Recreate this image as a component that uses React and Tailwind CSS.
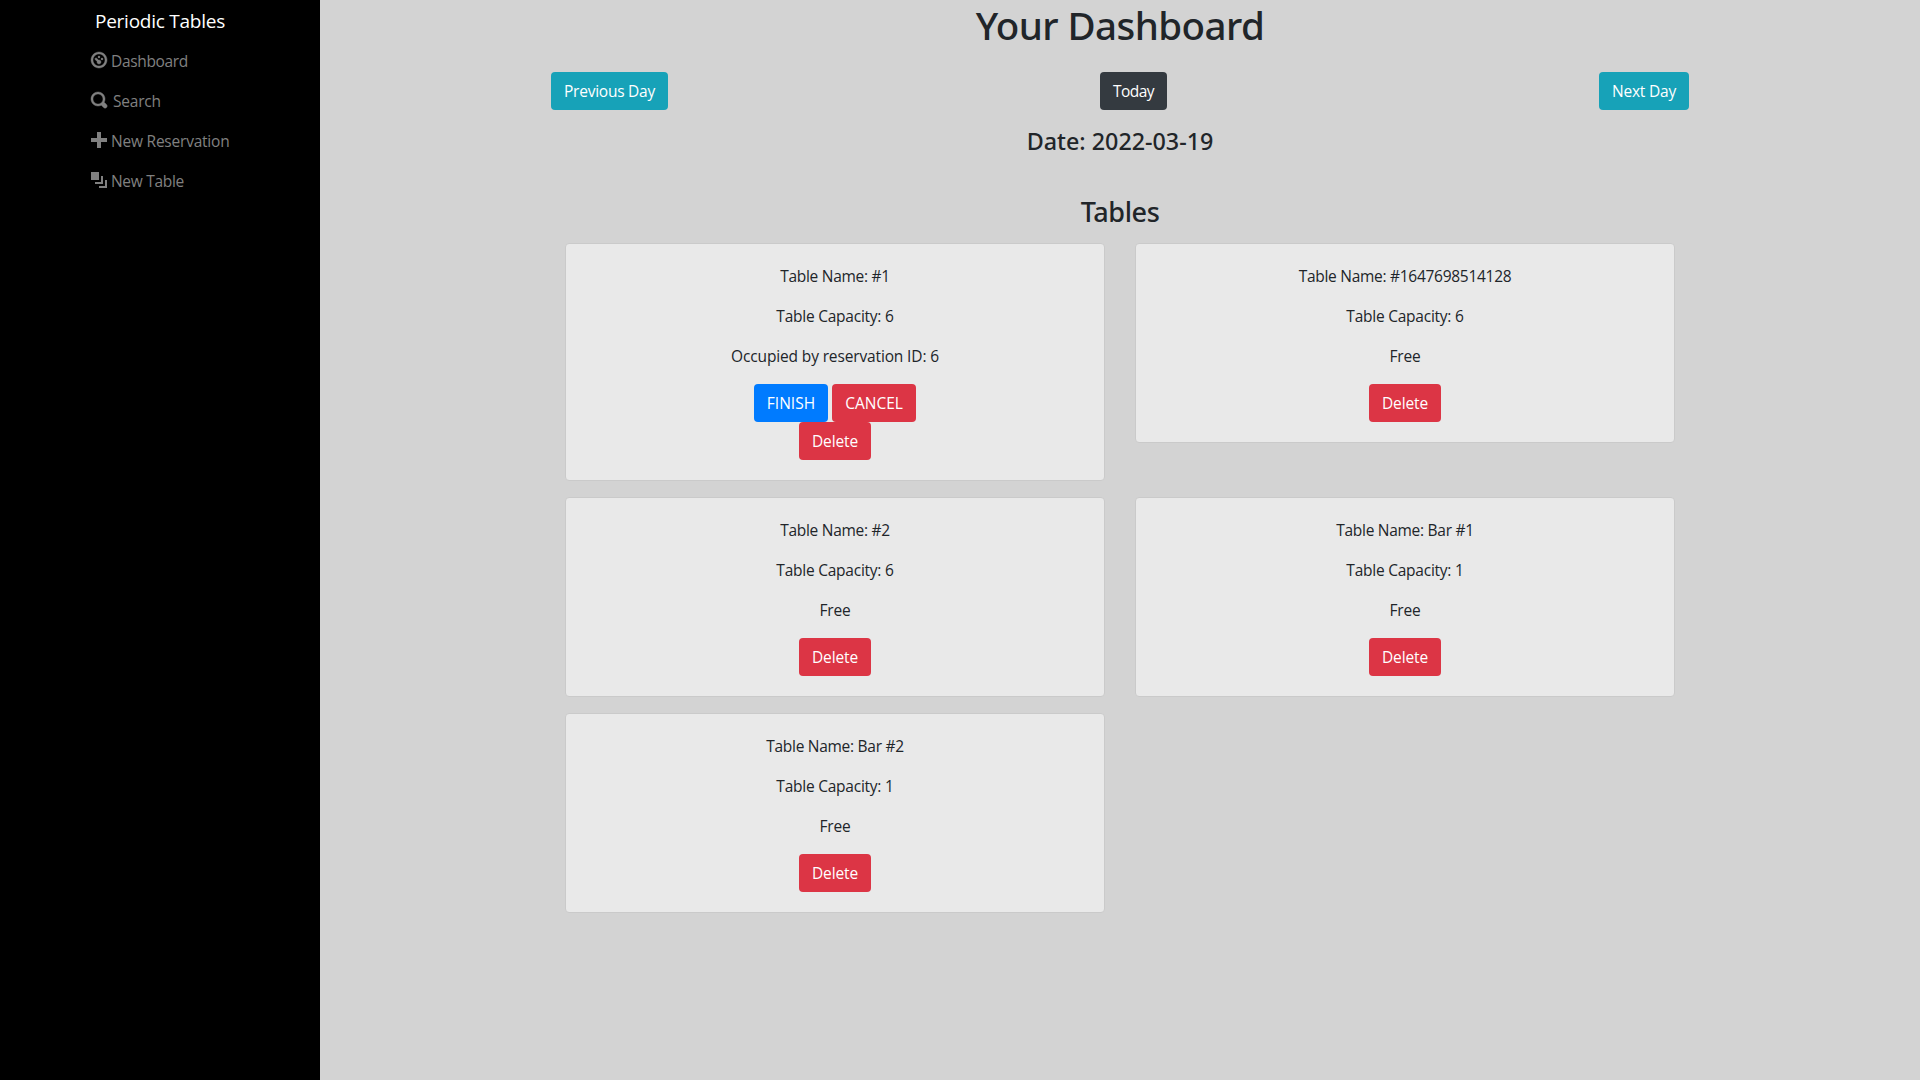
const icons = {
  dashboard:
    'M4 0c-2.2 0-4 1.8-4 4s1.8 4 4 4 4-1.8 4-4-1.8-4-4-4zm0 1c1.66 0 3 1.34 3 3s-1.34 3-3 3-3-1.34-3-3 1.34-3 3-3zm0 1c-.28 0-.5.22-.5.5s.22.5.5.5.5-.22.5-.5-.22-.5-.5-.5zm-1.66 1a.5.5 0 0 0-.19.84l.91.91c-.02.08-.06.16-.06.25 0 .55.45 1 1 1s1-.45 1-1-.45-1-1-1c-.09 0-.17.04-.25.06l-.91-.91a.5.5 0 0 0-.44-.16.5.5 0 0 0-.06 0zm3.16 0c-.28 0-.5.22-.5.5s.22.5.5.5.5-.22.5-.5-.22-.5-.5-.5z',
  search:
    'M3.5 0c-1.93 0-3.5 1.57-3.5 3.5s1.57 3.5 3.5 3.5c.59 0 1.17-.14 1.66-.41a1 1 0 0 0 .13.13l1 1a1.02 1.02 0 1 0 1.44-1.44l-1-1a1 1 0 0 0-.16-.13c.27-.49.44-1.06.44-1.66 0-1.93-1.55-3.5-3.5-3.5zm0 1c1.39 0 2.5 1.1 2.5 2.5 0 .66-.24 1.27-.66 1.72-.01.01-.02.02-.03.03a1 1 0 0 0-.13.13c-.44.4-1.04.63-1.69.63-1.39 0-2.5-1.1-2.5-2.5s1.1-2.5 2.5-2.5z',
  plus: 'M3 0v3h-3v2h3v3h2v-3h3v-2h-3v-3h-2z',
  layers: 'M0 0v4h4v-4h-4zm5 2v3h-3v1h4v-4h-1zm2 2v3h-3v1h4v-4h-1z',
};

const nav = [
  { icon: 'dashboard', label: 'Dashboard', stroke: 0.22, text: 'ml-[4px] tracking-[-0.33px]' },
  { icon: 'search', label: 'Search', stroke: 0.22, text: 'ml-[6px] tracking-[-0.2px]' },
  { icon: 'plus', label: 'New Reservation', stroke: 0, text: 'ml-[4px] tracking-[-0.22px]' },
  { icon: 'layers', label: 'New Table', stroke: 0, text: 'ml-[4px] tracking-[-0.3px]' },
];

const tables = [
  { name: '#1', capacity: 6, reservation: 6 },
  { name: '#1647698514128', capacity: 6 },
  { name: '#2', capacity: 6 },
  { name: 'Bar #1', capacity: 1 },
  { name: 'Bar #2', capacity: 1 },
];

function Button({ className, children }) {
  return (
    <button
      type="button"
      className={`flex h-[38px] items-center justify-center rounded-[4px] text-[15.5px] leading-6 whitespace-nowrap text-white ${className}`}
    >
      {children}
    </button>
  );
}

function TableCard({ table }) {
  return (
    <div className="flex flex-col items-center self-start rounded-[4px] border border-[#cacaca] bg-[#e9e9e9] p-5 text-center tracking-[-0.28px]">
      <p className="mb-4">Table Name: {table.name}</p>
      <p className="mb-4 tracking-[-0.24px]">Table Capacity: {table.capacity}</p>
      <p className="mb-4 tracking-[-0.14px]">
        {table.reservation ? `Occupied by reservation ID: ${table.reservation}` : 'Free'}
      </p>
      {table.reservation && (
        <div className="flex gap-1">
          <Button className="w-[74px] bg-[#007bff] tracking-normal">FINISH</Button>
          <Button className="w-[84px] bg-[#dc3545] tracking-normal">CANCEL</Button>
        </div>
      )}
      <Button className="w-[72px] bg-[#dc3545] tracking-[-0.13px]">Delete</Button>
    </div>
  );
}

export default function App() {
  return (
    <div className="flex h-screen overflow-hidden bg-[#d3d3d3] font-['Open_Sans',sans-serif] text-[15.5px] leading-6 text-[#212529]">
      <aside className="w-80 shrink-0 bg-black pl-[91px]">
        <div className="h-7 pt-[7px] pl-1 text-[19px] leading-7 tracking-[-0.25px] text-white">
          Periodic Tables
        </div>
        <nav className="mt-3 flex flex-col text-[#808080]">
          {nav.map((item) => (
            <a key={item.label} className="flex h-10 items-start pt-[9px]">
              <svg
                viewBox="0 0 8 8"
                className="mt-[3px] size-4 shrink-0 overflow-visible"
                fill="currentColor"
                stroke="currentColor"
                strokeWidth={item.stroke}
              >
                <path d={icons[item.icon]} />
              </svg>
              <span className={item.text}>{item.label}</span>
            </a>
          ))}
        </nav>
      </aside>

      <main className="flex flex-1 flex-col items-center">
        <h1 className="mb-[23px] pt-px font-['Noto_Sans',sans-serif] text-[38.5px] leading-[48px] font-medium tracking-[-0.55px]">
          Your Dashboard
        </h1>
        <div className="mb-[17px] flex w-[1138px] justify-between">
          <Button className="w-[117px] bg-[#17a2b8] tracking-[-0.25px]">Previous Day</Button>
          <Button className="w-[67px] bg-[#343a40] tracking-[-0.5px]">Today</Button>
          <Button className="w-[90px] bg-[#17a2b8] tracking-[-0.2px]">Next Day</Button>
        </div>
        <h4 className="mb-[39px] font-['Noto_Sans',sans-serif] text-[23.3px] leading-[29px] font-medium">
          Date: 2022-03-19
        </h4>
        <h3 className="mb-[15px] font-['Noto_Sans',sans-serif] text-[27px] leading-[33px] font-medium tracking-[-0.4px]">
          Tables
        </h3>
        <div className="grid w-[1110px] grid-cols-2 gap-x-[30px] gap-y-4">
          {tables.map((table) => (
            <TableCard key={table.name} table={table} />
          ))}
        </div>
      </main>
    </div>
  );
}
